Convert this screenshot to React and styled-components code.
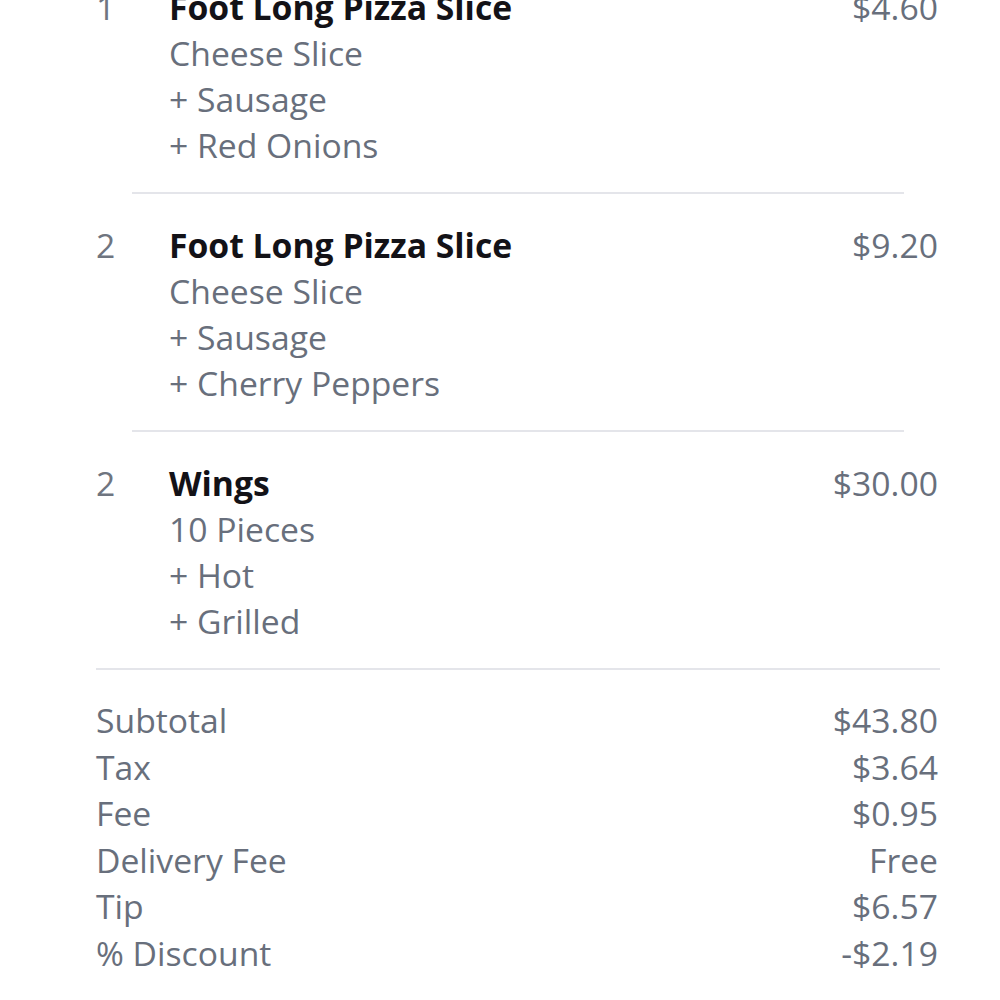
import React from "react";
import styled, { createGlobalStyle } from "styled-components";

const GlobalStyle = createGlobalStyle`
  html, body {
    margin: 0;
    padding: 0;
    background: #ffffff;
    overflow: hidden;
  }
`;

let Page = styled.section`
  width: 1000px;
  height: 1000px;
  box-sizing: border-box;
  padding: 0 60px 0 96px;
  font-family: "Open Sans", "Noto Sans", sans-serif;
  font-size: 33.7px;
  line-height: 46px;
  color: #686f7c;
  overflow: hidden;
`;

let Items = styled.div`
  margin-top: -16px;
`;

let ItemGrid = styled.div`
  display: grid;
  grid-template-columns: 73px 1fr auto;
  padding: ${(props) => (props.first ? "0" : "28px")} 2px 24px 0;
`;

let Qty = styled.div`
  color: #6f7580;
`;

let Details = styled.div`
  display: flex;
  flex-direction: column;
`;

let Name = styled.div`
  font-weight: 700;
  color: #131217;
`;

let Option = styled.div``;

let Price = styled.div`
  text-align: right;
`;

let Divider = styled.hr`
  border: none;
  height: 2px;
  background: #e4e5ea;
  margin: 0 ${(props) => props.inset || 0}px;
`;

let Summary = styled.div`
  padding-top: 27px;
  display: flex;
  flex-direction: column;
  line-height: 46.6px;
`;

let SummaryRow = styled.div`
  display: flex;
  justify-content: space-between;
  padding-right: 2px;
`;

const items = [
  { qty: 1, name: "Foot Long Pizza Slice", price: "$4.60", options: ["Cheese Slice", "+ Sausage", "+ Red Onions"] },
  { qty: 2, name: "Foot Long Pizza Slice", price: "$9.20", options: ["Cheese Slice", "+ Sausage", "+ Cherry Peppers"] },
  { qty: 2, name: "Wings", price: "$30.00", options: ["10 Pieces", "+ Hot", "+ Grilled"] },
];

const totals = [
  ["Subtotal", "$43.80"],
  ["Tax", "$3.64"],
  ["Fee", "$0.95"],
  ["Delivery Fee", "Free"],
  ["Tip", "$6.57"],
  ["% Discount", "-$2.19"],
];

const ItemRow = ({ item, first }) => (
  <ItemGrid first={first}>
    <Qty>{item.qty}</Qty>
    <Details>
      <Name>{item.name}</Name>
      {item.options.map((o, i) => (
        <Option key={i}>{o}</Option>
      ))}
    </Details>
    <Price>{item.price}</Price>
  </ItemGrid>
);

const App = () => {
  return (
    <>
      <GlobalStyle />
      <Page>
        <Items>
          {items.map((item, i) => (
            <React.Fragment key={i}>
              <ItemRow item={item} first={i === 0} />
              <Divider inset={i === items.length - 1 ? 0 : 36} />
            </React.Fragment>
          ))}
        </Items>
        <Summary>
          {totals.map(([label, value], i) => (
            <SummaryRow key={i}>
              <span>{label}</span>
              <Price as="span">{value}</Price>
            </SummaryRow>
          ))}
        </Summary>
      </Page>
    </>
  );
};

export default App;
